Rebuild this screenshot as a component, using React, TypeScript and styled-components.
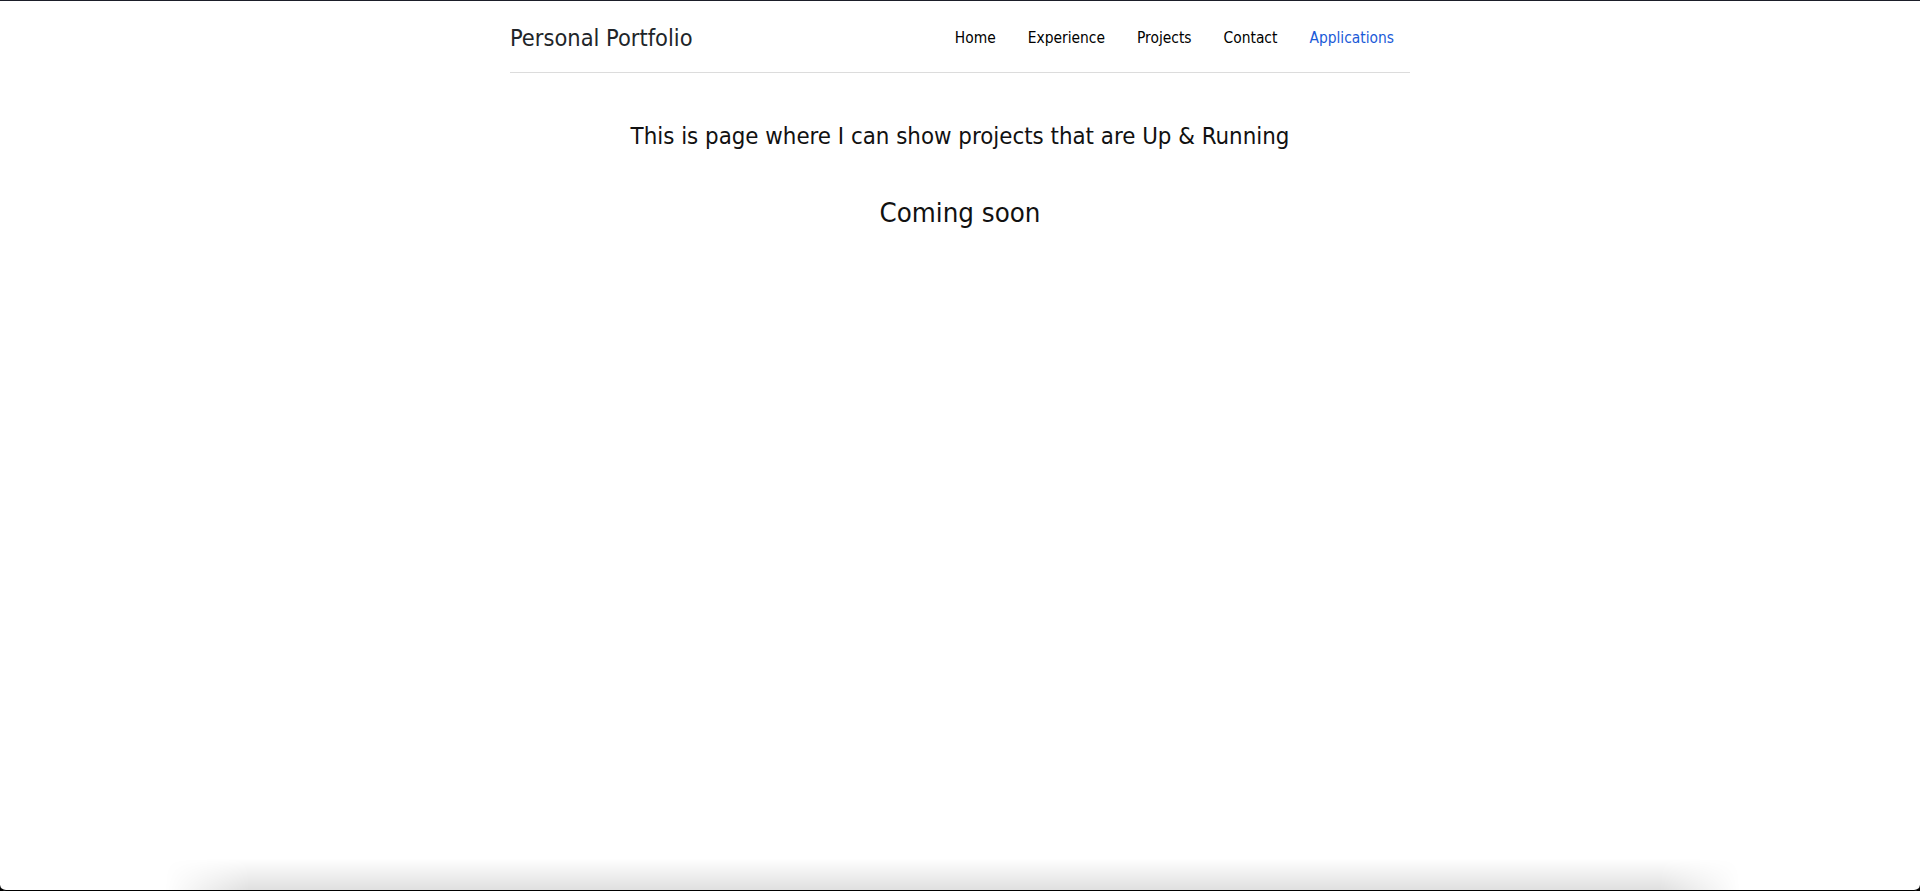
import React from "react";
import styled, { createGlobalStyle } from "styled-components";

const GlobalStyle = createGlobalStyle`
  html, body {
    margin: 0;
    padding: 0;
    background: #000;
    height: 100%;
  }
  #root {
    height: 100%;
  }
  * {
    box-sizing: border-box;
  }
`;

const Window = styled.div`
  height: 100vh;
  display: flex;
  flex-direction: column;
  background: #fff;
  border-top: 1px solid #1b1e29;
  border-bottom: 1px solid #000;
  border-radius: 0 0 6px 6px;
  overflow: hidden;
  font-family: "DejaVu Sans Condensed", "DejaVu Sans", sans-serif;
  font-stretch: condensed;
  color: #212529;
`;

const Container = styled.div`
  width: 900px;
  margin: 0 auto;
`;

const Header = styled.header`
  height: 72px;
  display: flex;
  align-items: center;
  justify-content: space-between;
  border-bottom: 1px solid #dcdcdc;
`;

const Brand = styled.a`
  font-size: 23.4px;
  color: #212529;
  text-decoration: none;
  padding-top: 2px;
`;

const Nav = styled.nav`
  display: flex;
  align-items: center;
  padding-top: 2px;
`;

const NavLink = styled.a<{ $active?: boolean }>`
  padding: 0 16px;
  font-size: 15.4px;
  color: ${(p) => (p.$active ? "#1a5ad8" : "#000")};
  text-decoration: none;
`;

const Main = styled.main`
  text-align: center;
  padding-top: 49px;
`;

const Lead = styled.h4`
  margin: 0;
  font-size: 23.8px;
  font-weight: 400;
  line-height: 1.2;
  color: #111;
`;

const Soon = styled.h3`
  margin: 46px 0 0;
  font-size: 27.4px;
  font-weight: 400;
  line-height: 1.2;
  color: #111;
`;

const BottomShade = styled.div`
  margin-top: auto;
  height: 32px;
  background: linear-gradient(to bottom, rgba(0, 0, 0, 0), rgba(0, 0, 0, 0.12));
  -webkit-mask-image: linear-gradient(
    to right,
    transparent 165px,
    #000 250px,
    #000 1660px,
    transparent 1740px
  );
  mask-image: linear-gradient(
    to right,
    transparent 165px,
    #000 250px,
    #000 1660px,
    transparent 1740px
  );
`;

export default function App() {
  const links = ["Home", "Experience", "Projects", "Contact", "Applications"];
  return (
    <>
      <GlobalStyle />
      <Window>
        <Container>
          <Header>
            <Brand href="#">Personal Portfolio</Brand>
            <Nav>
              {links.map((l) => (
                <NavLink key={l} href="#" $active={l === "Applications"}>
                  {l}
                </NavLink>
              ))}
            </Nav>
          </Header>
          <Main>
            <Lead>This is page where I can show projects that are Up &amp; Running</Lead>
            <Soon>Coming soon</Soon>
          </Main>
        </Container>
        <BottomShade />
      </Window>
    </>
  );
}
